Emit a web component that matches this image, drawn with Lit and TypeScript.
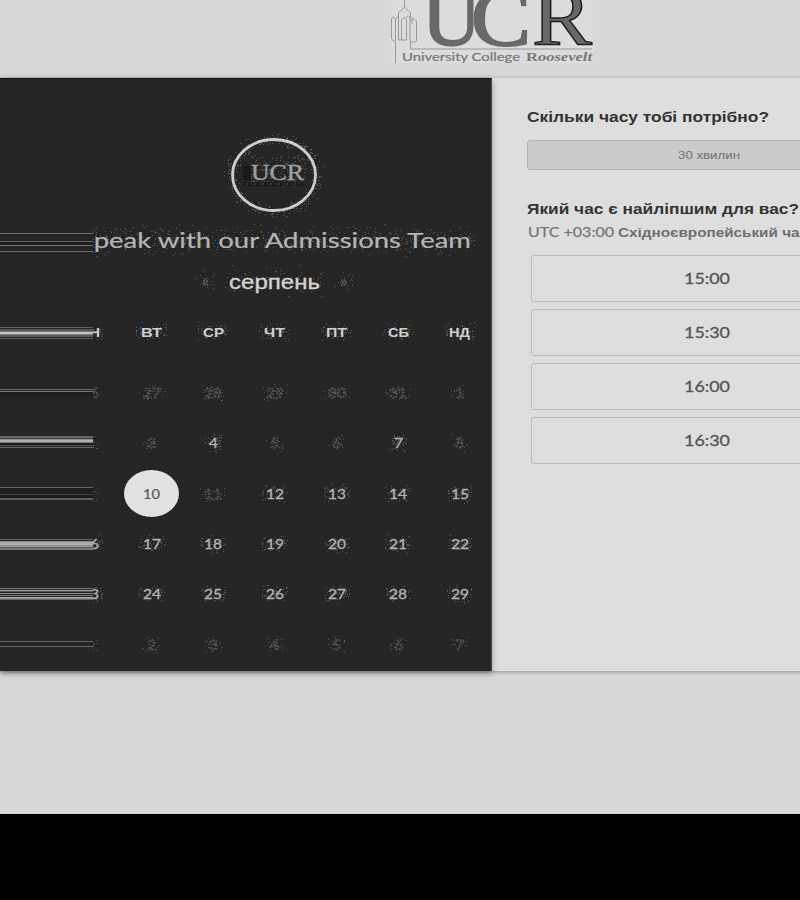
import { LitElement, html, css, svg } from "lit";
import { customElement } from "lit/decorators.js";

type Stripe = [number, number, string];

// Repeatable random source for the speckle texture.
const random = (seed: number) => () => {
  seed = (seed * 1664525 + 1013904223) >>> 0;
  return seed / 4294967296;
};

const speckle = (w: number, h: number, count: number, seed: number) => {
  const r = random(seed * 7919 + 17);
  let d = "";
  for (let i = 0; i < count; i++) {
    const x = Math.floor(r() * w);
    const y = Math.floor(((r() + r()) / 2) * h);
    d += `M${x} ${y}h1v1h-1z`;
  }
  return svg`<path class="dots" d=${d}></path>`;
};

// Text of a set width, on a lightly speckled ground.
const label = (
  text: string, width: number, size: number, kind: string,
  pad = 5, dots = 0, seed = 1,
) => {
  const w = width + pad * 2;
  const h = Math.round(size * 1.5);
  return html`<svg class="label ${kind}" width=${w} height=${h} viewBox="0 0 ${w} ${h}">
    ${dots ? speckle(w, h, dots, seed) : ""}
    <text x=${pad} y=${h / 2 + size * 0.36} font-size=${size} textLength=${width} lengthAdjust="spacingAndGlyphs">${text}</text>
  </svg>`;
};

const streak = (height: number, stripes: Stripe[]) => html`<svg
  class="streak" width="93" height=${height} shape-rendering="crispEdges">
  ${stripes.map(([y, h, c]) => svg`<rect y=${y} width="93" height=${h} fill=${c}></rect>`)}
</svg>`;

const WEEK = ["ПН", "ВТ", "СР", "ЧТ", "ПТ", "СБ", "НД"];
const ROWS: { days: number[]; on: number[]; stripes: Stripe[] }[] = [
  { days: [26, 27, 28, 29, 30, 31, 1], on: [],
    stripes: [[21, 1, "#6c6c6c"], [23, 1, "#777"], [24, 4, "#1f1f1f"], [29, 1, "#1c1c1c"]] },
  { days: [2, 3, 4, 5, 6, 7, 8], on: [4, 7],
    stripes: [[18, 2, "#676767"], [20, 1, "#444"], [21, 1, "#8c8c8c"], [22, 2, "#b2b2b2"], [24, 1, "#777"], [26, 1, "#171717"], [27, 1, "#555"], [29, 1, "#676767"]] },
  { days: [9, 10, 11, 12, 13, 14, 15], on: [10, 12, 13, 14, 15],
    stripes: [[18, 1, "#666"], [19, 6, "#1e1e1e"], [25, 1, "#404040"], [26, 3, "#1c1c1c"], [29, 2, "#606060"]] },
  { days: [16, 17, 18, 19, 20, 21, 22], on: [16, 17, 18, 19, 20, 21, 22],
    stripes: [[20, 1, "#666"], [22, 1, "#888"], [23, 2, "#aaa"], [25, 1, "#b4b4b4"], [26, 1, "#858585"], [27, 1, "#a0a0a0"], [28, 1, "#555"], [29, 2, "#777"]] },
  { days: [23, 24, 25, 26, 27, 28, 29], on: [23, 24, 25, 26, 27, 28, 29],
    stripes: [[19, 1, "#777"], [21, 1, "#a0a0a0"], [22, 1, "#555"], [24, 1, "#888"], [26, 1, "#777"], [28, 1, "#b0b0b0"], [29, 1, "#888"], [30, 1, "#666"]] },
  { days: [1, 2, 3, 4, 5, 6, 7], on: [],
    stripes: [[22, 1, "#6b6b6b"], [27, 1, "#6b6b6b"]] },
];

@customElement("app-root")
class AppRoot extends LitElement {
  static styles = css`
    :host { display: block; width: 800px; height: 900px; overflow: hidden; background: #000; font-family: "Liberation Sans", Arial, sans-serif; }
    .page { height: 814px; background: #d8d8d8; overflow: hidden; }
    .header { height: 78px; padding-left: 390px; }
    .header svg { display: block; }
    .card { display: flex; width: 1000px; height: 593px; background: #dedede; box-shadow: 0 1px 4px rgba(0,0,0,.35); }
    .calendar { box-sizing: border-box; width: 491.5px; height: 593px; padding: 55px 0 0 59px; flex: none; background: #252525; border-top: 1px solid #111; border-right: 1px solid #4a4a4a; box-shadow: 0 2px 6px rgba(0,0,0,.35); }
    .calendar > div { width: 432px; }
    .badge { height: 83px; display: flex; justify-content: center; }
    .badge svg { margin-left: -2px; }
    .line { display: flex; align-items: center; justify-content: center; }
    .calendar > .title { height: 46px; width: 444px; margin-left: -6px; }
    .title .streak { left: -53px; }
    .month { height: 36px; gap: 10px; }
    .calendar > .month { margin-left: -1px; }
    .row { display: grid; grid-template-columns: repeat(7, 61.7px); align-items: center; height: 50.3px; }
    .week { height: 64px; padding-bottom: 2px; margin-top: 1px; }
    .days { display: flex; flex-direction: column; padding-top: 2px; }
    .cell { display: flex; align-items: center; justify-content: center; height: 48px; }
    .pick { width: 55px; height: 47px; border-radius: 50%; background: #e1e1e1; display: flex; align-items: center; justify-content: center; }
    .strip { position: relative; }
    .streak { position: absolute; left: -59px; top: 0; background: #252525; }
    .label { display: block; flex: none; overflow: visible; }
    .dots { fill: #585858; shape-rendering: crispEdges; }
    .heading { fill: #b4b4b4; stroke: #b4b4b4; stroke-width: .2; font-family: Lato, sans-serif; }
    .name { fill: #d2d2d2; stroke: #d2d2d2; stroke-width: .35; }
    .wk { fill: #cfcfcf; font-weight: 700; }
    .on { fill: #b3b3b3; stroke: #b3b3b3; stroke-width: .3; font-family: Lato, sans-serif; }
    .off { fill: #181818; stroke: #666; stroke-width: .8; stroke-dasharray: 2 1.2; font-family: Lato, sans-serif; }
    .arrow { fill: #686868; }
    .on .dots, .off .dots, .name .dots, .heading .dots { stroke: none; }
    .picked { fill: #555; font-family: Lato, sans-serif; stroke: #555; stroke-width: .2; }
    .booking { width: 360px; padding: 27px 0 0 35px; }
    .question { fill: #333; font-weight: 700; }
    .duration { box-sizing: border-box; display: flex; align-items: center; justify-content: center; width: 364px; height: 30px; margin-top: 12px; padding-bottom: 2px; border: 1px solid #b5b5b5; border-radius: 3px; background: #cbcbcb; }
    .duration-text { fill: #707070; }
    .second { margin-top: 27px; }
    .zone { display: flex; gap: 4px; margin: 2px 0 0 1px; }
    .utc { fill: #777; stroke: #777; stroke-width: .25; font-family: Lato, sans-serif; }
    .zone-name { fill: #6e6e6e; font-weight: 700; }
    .slots { display: flex; flex-direction: column; gap: 7px; margin: 13px 0 0 4px; }
    .slot { box-sizing: border-box; width: 353px; height: 47px; padding-bottom: 1px; border: 1px solid #bdbdbd; border-radius: 3px; box-shadow: 0 0 1px #c4c4c4; display: flex; align-items: center; justify-content: center; }
    .time { fill: #555; stroke: #555; stroke-width: .3; font-family: Lato, sans-serif; }
  `;

  logo() {
    return html`<svg width="204" height="66" viewBox="390 0 204 66">
      <rect x="391" y="0" width="202" height="63" fill="#dcdcdc"></rect>
      <path fill="none" stroke="#9b9b9b" d="M404.500 0v7l-6 6v5M404.500 7l6 6v5M395.500 63V42l-4-3V19q2-4 4 0v22M395.500 19q3-4 3 0v21h3V20q3-5 5 0v20h-5M406 18q2-4 4 0v23M410.500 21q3-4 6 0v20q-3 3-6 0V49H592M412 17v7"></path>
      <g font-family="Liberation Serif, serif" font-size="80">
        <text x="422" y="44.500" fill="#696969" stroke="#696969" stroke-width="2" textLength="59" lengthAdjust="spacingAndGlyphs">U</text>
        <text x="471" y="44.500" fill="#696969" stroke="#696969" stroke-width="2" textLength="60" lengthAdjust="spacingAndGlyphs">C</text>
        <text x="532" y="44.500" fill="#686868" stroke="#1d1d1d" stroke-width="1.400" textLength="60" lengthAdjust="spacingAndGlyphs">R</text>
      </g>
      <text x="402" y="61" font-family="Lato, sans-serif" font-size="10.500" fill="#777" stroke="#777" stroke-width=".2" textLength="118" lengthAdjust="spacingAndGlyphs">University College</text>
      <text x="526" y="61" font-family="Liberation Serif, serif" font-weight="700" font-size="11.500" fill="#777" textLength="66" lengthAdjust="spacingAndGlyphs">R<tspan font-style="italic">oosevelt</tspan></text>
    </svg>`;
  }

  badge() {
    const r = random(91);
    let d = "";
    for (let i = 0; i < 420; i++) {
      const a = r() * Math.PI * 2;
      const k = 1 + (r() + r() - 1) * 0.2;
      d += `M${Math.round(50 + Math.cos(a) * 43 * k)} ${Math.round(41 + Math.sin(a) * 37 * k)}h1v1h-1z`;
    }
    for (let i = 0; i < 190; i++) d += `M${Math.round(22 + r() * 60)} ${Math.round(21 + r() * 31)}h1v1h-1z`;
    return html`<svg width="100" height="84" viewBox="0 0 100 84">
      <path class="dots" d=${d}></path>
      <ellipse cx="50" cy="41" rx="41.500" ry="35.500" fill="none" stroke="#cdcdcd" stroke-width="2.800"></ellipse>
      <rect x="19" y="32" width="8" height="14" fill="#191919"></rect>
      <rect x="20" y="48" width="60" height="4" fill="#1b1b1b"></rect>
      <path d="M22 50H78" stroke="#555" stroke-dasharray="2 3 1 2"></path>
      <text x="27" y="46" font-family="Liberation Serif, serif" font-size="24" fill="#a0a0a0" stroke="#a0a0a0" stroke-width=".4" textLength="53" lengthAdjust="spacingAndGlyphs">UCR</text>
    </svg>`;
  }

  day(n: number, on: boolean, seed: number) {
    if (n === 10) return html`<div class="pick">${label("10", 17, 13, "picked")}</div>`;
    const w = n > 9 ? 18 : 9;
    return label(String(n), w, 13.5, on ? "on" : "off", 4, on ? 50 : n > 9 ? 20 : 12, seed);
  }

  render() {
    return html`<div class="page">
      <div class="header">${this.logo()}</div>
      <div class="card">
        <div class="calendar">
          <div class="badge">${this.badge()}</div>
          <div class="line title strip">
            ${label("Speak with our Admissions Team", 392, 22, "heading", 4, 700, 4)}
            ${streak(46, [[16, 1, "#6b6b6b"], [24, 1, "#666"], [25, 3, "#1c1c1c"], [28, 1, "#777"], [34, 1, "#6b6b6b"]])}
          </div>
          <div class="line month">
            ${label("«", 7, 16, "arrow", 6, 18, 5)}
            ${label("серпень", 91, 21, "name", 4, 110, 6)}
            ${label("»", 7, 16, "arrow", 6, 18, 7)}
          </div>
          <div class="row week strip">
            ${WEEK.map((d, i) => html`<div class="cell">${label(d, 21, 13.5, "wk", 5, 60, i + 12)}</div>`)}
            ${streak(64, [[27, 1, "#626262"], [29, 2, "#555"], [31, 1, "#777"], [32, 2, "#c2c2c2"], [34, 1, "#808080"], [35, 2, "#595959"], [38, 1, "#5f5f5f"]])}
          </div>
          <div class="days">
            ${ROWS.map((row, j) => html`<div class="row strip">
              ${row.days.map((n, i) => html`<div class="cell">${this.day(n, row.on.includes(n), j * 7 + i + 30)}</div>`)}
              ${streak(50, row.stripes)}
            </div>`)}
          </div>
        </div>
        <div class="booking">
          ${label("Скільки часу тобі потрібно?", 242, 15.5, "question", 0)}
          <div class="duration">${label("30 хвилин", 62, 11.5, "duration-text", 0)}</div>
          <div class="second">${label("Який час є найліпшим для вас?", 272, 15.5, "question", 0)}</div>
          <div class="zone">
            ${label("UTC +03:00", 86, 13, "utc", 0)}
            ${label("Східноєвропейський час", 190, 13, "zone-name", 0)}
          </div>
          <div class="slots">
            ${["15:00", "15:30", "16:00", "16:30"].map((t) => html`<div class="slot">${label(t, 46, 15.5, "time", 0)}</div>`)}
          </div>
        </div>
      </div>
    </div>`;
  }
}
